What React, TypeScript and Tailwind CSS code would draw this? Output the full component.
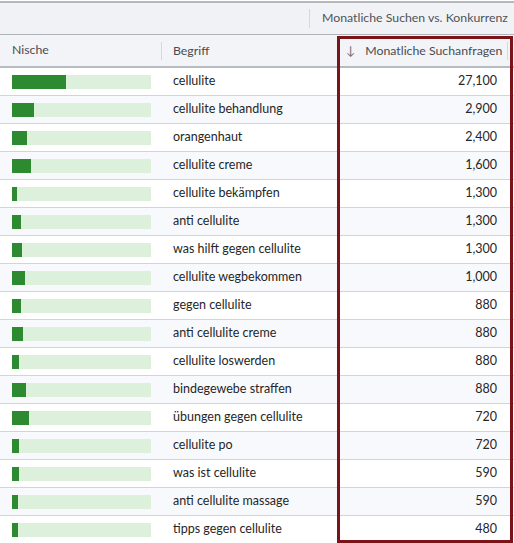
import React from 'react';

const rows = [
    { term: 'cellulite', volume: '27,100', bar: 54 },
    { term: 'cellulite behandlung', volume: '2,900', bar: 22 },
    { term: 'orangenhaut', volume: '2,400', bar: 15 },
    { term: 'cellulite creme', volume: '1,600', bar: 19 },
    { term: 'cellulite bekämpfen', volume: '1,300', bar: 5 },
    { term: 'anti cellulite', volume: '1,300', bar: 9 },
    { term: 'was hilft gegen cellulite', volume: '1,300', bar: 10 },
    { term: 'cellulite wegbekommen', volume: '1,000', bar: 13 },
    { term: 'gegen cellulite', volume: '880', bar: 9 },
    { term: 'anti cellulite creme', volume: '880', bar: 11 },
    { term: 'cellulite loswerden', volume: '880', bar: 7 },
    { term: 'bindegewebe straffen', volume: '880', bar: 14 },
    { term: 'übungen gegen cellulite', volume: '720', bar: 17 },
    { term: 'cellulite po', volume: '720', bar: 7 },
    { term: 'was ist cellulite', volume: '590', bar: 7 },
    { term: 'anti cellulite massage', volume: '590', bar: 6 },
    { term: 'tipps gegen cellulite', volume: '480', bar: 6 },
];

const App = () => {
    return (
        <div className="relative w-[514px] h-[543px] overflow-hidden bg-white text-[12.5px] text-[#262626] whitespace-nowrap" style={{ fontFamily: 'Lato, "Open Sans", sans-serif' }}>
            {/* group header */}
            <div className="flex h-[34px] border-t-2 border-b border-t-[#b4b7be] border-b-[#b0b3ba] bg-[#f1f2f6] mt-px text-[12.3px]">
                <div className="w-[309px] shrink-0" />
                <div className="flex items-center border-l border-[#d6d8dd] my-[6px] pl-[12px] text-[#505257]">
                    Monatliche Suchen vs. Konkurrenz
                </div>
            </div>

            {/* column header */}
            <div className="flex h-[33px] items-center border-b-2 border-[#b7bac1] bg-[#f3f4f7] text-[#4a4c50] text-[12.3px]">
                <div className="w-[161px] shrink-0 pl-[12px]">Nische</div>
                <div className="w-[148px] shrink-0 border-l border-[#d6d8dd] pl-[11px] h-[18px] leading-[18px]">Begriff</div>
                <div className="w-[199px] shrink-0 border-r border-[#d6d8dd] h-[18px] leading-[18px] flex items-center pl-[37px] gap-[10px]">
                    <span className="text-[#6a6c70]">↓</span>
                    <span>Monatliche Suchanfragen</span>
                </div>
            </div>

            {/* rows */}
            {rows.map((row, i) => (
                <div key={i} className={`flex h-[28px] items-center border-b border-[#d2d4d9] ${i % 2 === 1 ? 'bg-[#f8f9fc]' : 'bg-white'}`}>
                    <div className="w-[161px] shrink-0 pl-[12px]">
                        <div className="w-[139px] h-[14px] bg-[#dcf0dc] flex">
                            <div className="h-full bg-[#2d8a31]" style={{ width: row.bar }} />
                        </div>
                    </div>
                    <div className="w-[148px] shrink-0 pl-[12px]">{row.term}</div>
                    <div className="flex-1 text-right pr-[17px]">{row.volume}</div>
                </div>
            ))}

            {/* highlight box */}
            <div className="absolute left-[337px] top-[36px] w-[176px] h-[507px] border-[3px] border-[#7b1418] pointer-events-none" />
        </div>
    );
};

export default App;
